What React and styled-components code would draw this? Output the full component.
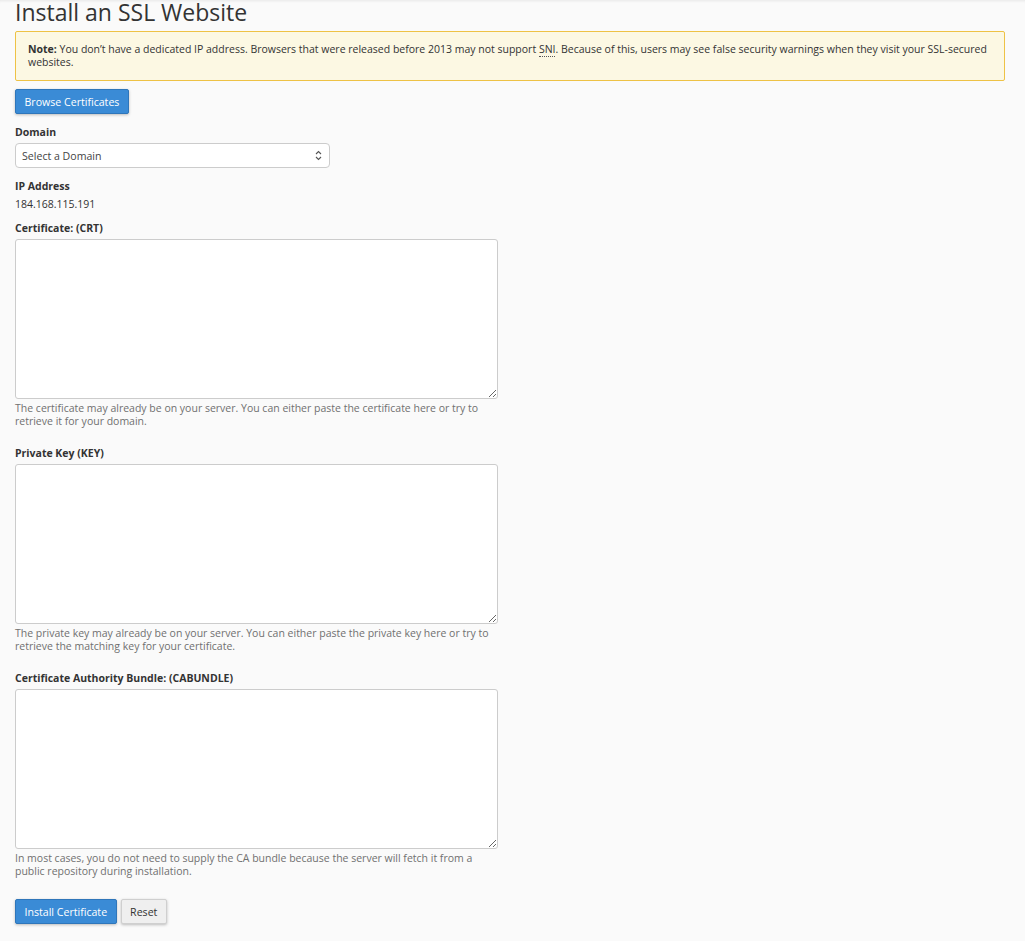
import React from "react";
import styled, { createGlobalStyle } from "styled-components";

const GlobalStyle = createGlobalStyle`
  html, body {
    margin: 0;
    padding: 0;
    background: #fafafa;
  }
  body {
    font-family: "Open Sans", "DejaVu Sans", sans-serif;
    font-size: 10.5px;
    line-height: 13px;
    color: #333;
  }
`;

const Page = styled.div`
  min-height: 941px;
  padding: 0 20px 0 15px;
  box-sizing: border-box;
  box-shadow: inset 0 3px 3px -2px rgba(0, 0, 0, 0.08);
`;

const Title = styled.h1`
  margin: 0;
  font-size: 23px;
  line-height: 25px;
  font-weight: 400;
  color: #333;
`;

const Alert = styled.div`
  margin-top: 6px;
  padding: 11px 12px;
  background: #fcf8e3;
  border: 1px solid #eec245;
  border-radius: 2px;
  color: #333;

  & strong {
    font-weight: 700;
  }
`;

const Abbr = styled.abbr`
  text-decoration: none;
  border-bottom: 1px dotted #555;
`;

const NoBreak = styled.span`
  white-space: nowrap;
`;

const Button = styled.button`
  display: inline-block;
  height: 25px;
  padding: 0 8.5px;
  font-family: inherit;
  font-size: 10.6px;
  border-radius: 2px;
  cursor: pointer;
  box-shadow: 0 1px 3px rgba(0, 0, 0, 0.25);
  color: ${(p) => (p.$primary ? "#fff" : "#333")};
  background: ${(p) => (p.$primary ? "#3a8bd6" : "#efefef")};
  border: 1px solid ${(p) => (p.$primary ? "#2f76ba" : "#cfcfcf")};
`;

const Toolbar = styled.div`
  margin-top: 8px;
`;

const Group = styled.div`
  margin-top: ${(p) => p.$top || 11}px;
`;

const Label = styled.label`
  display: block;
  font-weight: 700;
  line-height: 14px;
  margin-bottom: 4px;
`;

const Value = styled.div`
  line-height: 14px;
`;

const SelectWrap = styled.div`
  position: relative;
  width: 315px;
`;

const Select = styled.select`
  appearance: none;
  width: 100%;
  height: 25px;
  padding: 0 24px 0 6px;
  font-family: inherit;
  font-size: 10.6px;
  color: #444;
  background: #fff;
  border: 1px solid #ccc;
  border-radius: 4px;
  outline: none;
`;

const Chevrons = styled.svg`
  position: absolute;
  right: 8px;
  top: 7px;
  pointer-events: none;
`;

const TextArea = styled.textarea`
  display: block;
  width: 483px;
  height: 160px;
  box-sizing: border-box;
  padding: 6px;
  font-family: "Liberation Mono", monospace;
  font-size: 11px;
  background: #fff;
  border: 1px solid #ccc;
  border-radius: 3px;
  outline: none;
  resize: vertical;
`;

const Help = styled.p`
  margin: 3px 0 0;
  width: 483px;
  color: #707070;
`;

const Actions = styled.div`
  display: flex;
  gap: 4px;
  margin-top: 21px;
`;

const fields = [
  {
    id: "crt",
    label: "Certificate: (CRT)",
    help: "The certificate may already be on your server. You can either paste the certificate here or try to retrieve it for your domain.",
  },
  {
    id: "key",
    label: "Private Key (KEY)",
    help: "The private key may already be on your server. You can either paste the private key here or try to retrieve the matching key for your certificate.",
  },
  {
    id: "cabundle",
    label: "Certificate Authority Bundle: (CABUNDLE)",
    help: "In most cases, you do not need to supply the CA bundle because the server will fetch it from a public repository during installation.",
  },
];

const App = () => {
  return (
    <Page>
      <GlobalStyle />
      <Title>Install an SSL Website</Title>
      <Alert>
        <strong>Note:</strong> You don’t have a dedicated IP address. Browsers
        that were released before 2013 may not support <Abbr>SNI</Abbr>.
        Because of this, users may see false security warnings when they visit
        your <NoBreak>SSL-secured</NoBreak> websites.
      </Alert>
      <Toolbar>
        <Button $primary type="button">
          Browse Certificates
        </Button>
      </Toolbar>

      <Group>
        <Label htmlFor="domain">Domain</Label>
        <SelectWrap>
          <Select id="domain" defaultValue="">
            <option value="">Select a Domain</option>
          </Select>
          <Chevrons width="7" height="11" viewBox="0 0 7 11">
            <path
              d="M1 4 L3.5 1.5 L6 4 M1 7 L3.5 9.5 L6 7"
              fill="none"
              stroke="#555"
              strokeWidth="1.1"
            />
          </Chevrons>
        </SelectWrap>
      </Group>

      <Group>
        <Label as="div">IP Address</Label>
        <Value>184.168.115.191</Value>
      </Group>

      {fields.map((f, i) => (
        <Group key={f.id} $top={i === 0 ? 10 : 18}>
          <Label htmlFor={f.id}>{f.label}</Label>
          <TextArea id={f.id} />
          <Help>{f.help}</Help>
        </Group>
      ))}

      <Actions>
        <Button $primary type="button">
          Install Certificate
        </Button>
        <Button type="button">Reset</Button>
      </Actions>
    </Page>
  );
};

export default App;
